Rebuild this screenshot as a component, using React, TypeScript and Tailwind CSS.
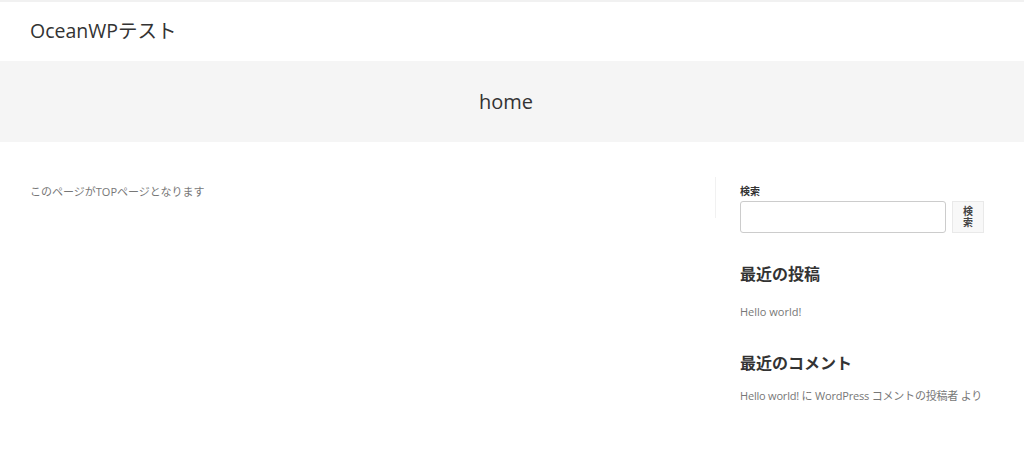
const font = { fontFamily: '"Open Sans", "Noto Sans CJK JP", sans-serif' };

export default function App() {
  return (
    <div className="min-h-[472px] bg-white text-[#333]" style={font}>
      {/* Header */}
      <header className="h-[61px] border-t-2 border-[#f1f1f1] flex items-center px-[30px]">
        <a className="text-[19.5px] leading-none text-[#333] -mt-[2px]">OceanWPテスト</a>
      </header>

      {/* Page title */}
      <div className="h-[81px] bg-[#f5f5f5] flex items-center justify-center pr-3">
        <h1 className="text-[20px] leading-none font-normal text-[#333]">home</h1>
      </div>

      {/* Content */}
      <div className="flex items-start pl-[30px] pr-[40px] pt-[35px]">
        <main className="flex-1 h-[41px] border-r border-[#f1f1f1] pt-[7px]">
          <p className="text-[11px] leading-[16px] text-[#777]">このページがTOPページとなります</p>
        </main>

        <aside className="w-[268px] pl-[24px] pt-[7px]">
          <div>
            <label className="block text-[10px] font-semibold leading-[14px] text-[#333] mb-[3px]">検索</label>
            <div className="flex gap-[6px]">
              <input className="w-[206px] h-[32px] border border-[#ccc] rounded-[3px] bg-white" />
              <button className="w-[32px] h-[32px] bg-[#f8f8f8] border border-[#e9e9e9] text-[10px] font-bold leading-[11px] text-[#444] flex items-center justify-center">
                <span className="w-[10px] break-all">検索</span>
              </button>
            </div>
          </div>

          <section className="mt-[31px]">
            <h2 className="text-[16px] font-bold leading-[20px] text-[#333]">最近の投稿</h2>
            <ul className="mt-[20px]">
              <li className="text-[11px] leading-[16px] text-[#777]">Hello world!</li>
            </ul>
          </section>

          <section className="mt-[33px]">
            <h2 className="text-[16px] font-bold leading-[20px] text-[#333]">最近のコメント</h2>
            <ul className="mt-[15px]">
              <li className="text-[11px] leading-[16px] text-[#777] whitespace-nowrap tracking-[-0.2px]">
                Hello world! に WordPress コメントの投稿者 より
              </li>
            </ul>
          </section>
        </aside>
      </div>
    </div>
  );
}
